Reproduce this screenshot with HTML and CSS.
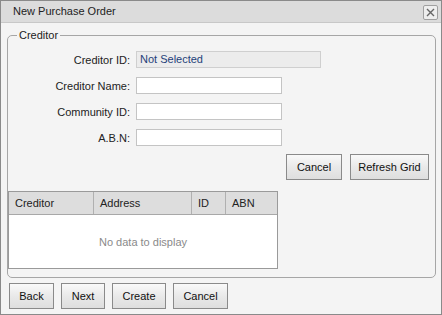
FILE: index.html
```html
<!DOCTYPE html>
<html lang="en">
<head>
    <meta charset="UTF-8">
    <title>New Purchase Order</title>
    <link rel="stylesheet" href="styles.css">
</head>
<body>
    <div class="window">
        <div class="title-bar">
            <span class="title">New Purchase Order</span>
            <span class="close-btn">
                <svg width="9" height="9" viewBox="0 0 9 9"><path d="M1 1 L8 8 M8 1 L1 8" stroke="#666" stroke-width="1.4"/></svg>
            </span>
        </div>

        <div class="window-body">
            <fieldset class="group">
                <legend>Creditor</legend>

                <div class="form-row">
                    <label>Creditor ID:</label>
                    <div class="field field-readonly">Not Selected</div>
                </div>
                <div class="form-row">
                    <label>Creditor Name:</label>
                    <input class="field" type="text">
                </div>
                <div class="form-row">
                    <label>Community ID:</label>
                    <input class="field" type="text">
                </div>
                <div class="form-row">
                    <label>A.B.N:</label>
                    <input class="field" type="text">
                </div>

                <div class="actions">
                    <button class="btn btn-cancel">Cancel</button>
                    <button class="btn btn-refresh">Refresh Grid</button>
                </div>

                <div class="grid">
                    <div class="grid-header">
                        <div class="col col-creditor">Creditor</div>
                        <div class="col col-address">Address</div>
                        <div class="col col-id">ID</div>
                        <div class="col col-abn">ABN</div>
                    </div>
                    <div class="grid-body">No data to display</div>
                </div>
            </fieldset>

            <div class="footer">
                <button class="btn btn-back">Back</button>
                <button class="btn btn-next">Next</button>
                <button class="btn btn-create">Create</button>
                <button class="btn btn-close">Cancel</button>
            </div>
        </div>
    </div>
</body>
</html>
```

FILE: styles.css
```css
* {
    box-sizing: border-box;
}
body {
    margin: 0;
    font-family: "Liberation Sans", Arial, sans-serif;
    font-size: 11px;
    color: #222;
    background: #fff;
}
.window {
    width: 442px;
    height: 315px;
    border: 1px solid #8a8a8a;
    background-color: #f4f4f4;
}
.title-bar {
    height: 22px;
    background-color: #dcdcdc;
    border-bottom: 1px solid #c8c8c8;
    display: flex;
    align-items: center;
    justify-content: space-between;
    padding: 0 3px 0 12px;
}
.title {
    color: #222;
    margin-top: -1px;
}
.close-btn {
    width: 15px;
    height: 15px;
    border: 1px solid #a0a0a0;
    border-radius: 2px;
    background-color: #eee;
    display: flex;
    align-items: center;
    justify-content: center;
    margin-top: 2px;
}
.window-body {
    padding: 5px 5px 0 6px;
}
.group {
    margin: 0;
    padding: 0 6px 8px 0;
    border: 1px solid #a6a6a6;
    border-radius: 5px;
    background-color: #f4f4f4;
}
.group legend {
    padding: 0 2px;
    margin-left: 9px;
    line-height: 14px;
    color: #222;
}
.form-row {
    display: flex;
    align-items: center;
    height: 17px;
    margin-bottom: 9px;
}
.form-row:first-of-type {
    margin-top: 9px;
}
.form-row label {
    width: 122px;
    text-align: right;
    margin-right: 6px;
    color: #222;
}
.field {
    width: 146px;
    height: 17px;
    border: 1px solid #c4c4c4;
    background-color: #fff;
    font-family: inherit;
    font-size: 11px;
    padding: 0 4px;
    margin: 0;
    outline: none;
}
.field-readonly {
    width: 185px;
    background-color: #ececec;
    border-color: #cfcfcf;
    color: #1f3f7a;
    line-height: 15px;
    padding: 0 3px;
}
.actions {
    display: flex;
    justify-content: flex-end;
    gap: 8px;
    margin-top: -1px;
}
.btn {
    height: 26px;
    border: 1px solid #8a8a8a;
    background: linear-gradient(#f9f9f9, #e9e9e9 50%, #dedede);
    font-family: inherit;
    font-size: 11px;
    color: #111;
    padding: 0;
    margin: 0;
    cursor: pointer;
}
.btn-cancel { width: 56px; }
.btn-refresh { width: 79px; }
.grid {
    margin-top: 11px;
    width: 270px;
    height: 78px;
    border: 1px solid #9a9a9a;
    background-color: #fff;
    display: flex;
    flex-direction: column;
}
.grid-header {
    display: flex;
    height: 23px;
    background-color: #dddddd;
    border-bottom: 1px solid #a8a8a8;
}
.col {
    padding-left: 6px;
    line-height: 22px;
    border-right: 1px solid #b0b0b0;
    color: #222;
}
.col-creditor { width: 85px; }
.col-address { width: 98px; }
.col-id { width: 34px; }
.col-abn { flex: 1; border-right: none; }
.grid-body {
    flex: 1;
    display: flex;
    align-items: center;
    justify-content: center;
    color: #8a8a8a;
}
.footer {
    display: flex;
    gap: 7px;
    padding: 5px 0 0 2px;
}
.btn-back { width: 45px; }
.btn-next { width: 44px; }
.btn-create { width: 54px; }
.btn-close { width: 55px; }
```
